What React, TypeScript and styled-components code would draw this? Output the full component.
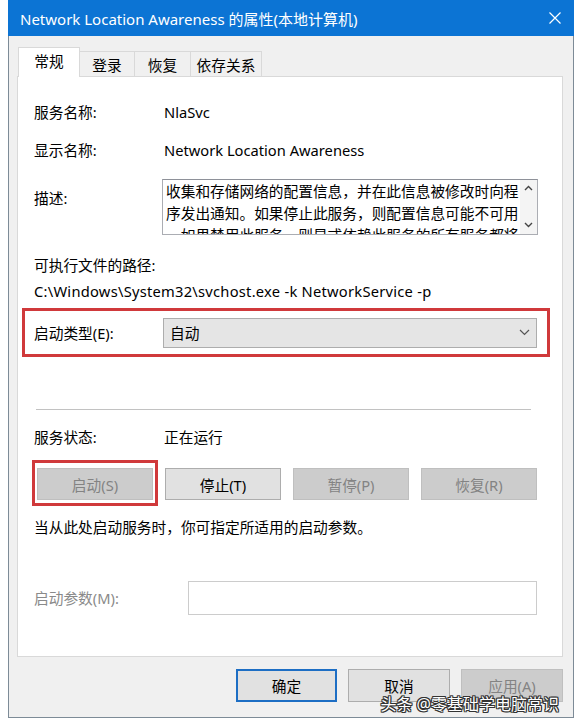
import React from "react";
import styled, { createGlobalStyle } from "styled-components";

const FONT = `"Noto Sans", "Noto Sans CJK SC", sans-serif`;

const Global = createGlobalStyle`
  html, body { margin: 0; padding: 0; background: #ffffff; }
  body { font-family: ${FONT}; }
`;

const Window = styled.div`
  position: relative;
  margin-left: 8px;
  width: 566px;
  height: 718px;
  box-sizing: border-box;
  border: 1px solid #7d8b97;
  border-top: none;
  background: #f0f0f0;
  display: flex;
  flex-direction: column;
  font-family: ${FONT};
  font-size: 14.7px;
  color: #000;
`;

const TitleBar = styled.div`
  margin: 0 -1px;
  height: 36px;
  background: #0c74d4;
  display: flex;
  align-items: center;
  justify-content: space-between;
  padding: 0 13px 0 12px;
  color: #ffffff;
  font-size: 15px;
`;

const Body = styled.div`
  flex: 1;
  display: flex;
  flex-direction: column;
  padding: 12px 10px 0 8px;
`;

const TabStrip = styled.div`
  display: flex;
  align-items: flex-end;
  height: 29px;
  margin-left: 1px;
  margin-bottom: -1px;
  position: relative;
  z-index: 1;
`;

const Tab = styled.div<{ $active?: boolean; $w: number }>`
  box-sizing: border-box;
  width: ${(p) => p.$w}px;
  height: ${(p) => (p.$active ? 30 : 26)}px;
  display: flex;
  align-items: center;
  justify-content: center;
  background: ${(p) => (p.$active ? "#ffffff" : "#f0f0f0")};
  border: 1px solid #d9d9d9;
  border-bottom: ${(p) => (p.$active ? "none" : "1px solid #d9d9d9")};
  ${(p) => (p.$active ? "" : "border-left: none;")}
  padding-bottom: ${(p) => (p.$active ? 4 : 0)}px;
`;

const Panel = styled.div`
  box-sizing: border-box;
  height: 581px;
  background: #ffffff;
  border: 1px solid #d9d9d9;
  padding-left: 16px;
  display: flex;
  flex-direction: column;
`;

const Row = styled.div<{ $mt: number; $align?: string }>`
  display: flex;
  align-items: ${(p) => p.$align || "center"};
  min-height: 24px;
  margin-top: ${(p) => p.$mt}px;
`;

const Label = styled.div<{ $w?: number; $disabled?: boolean; $pt?: number }>`
  width: ${(p) => p.$w ?? 128}px;
  flex: none;
  line-height: 24px;
  color: ${(p) => (p.$disabled ? "#8a8a8a" : "#000")};
  padding-top: ${(p) => p.$pt ?? 0}px;
`;

const Value = styled.div`
  line-height: 24px;
  padding-left: 2px;
  white-space: nowrap;
`;

const PathText = styled.div`
  line-height: 24px;
  white-space: nowrap;
  letter-spacing: 0.25px;
`;

const TextBox = styled.div`
  box-sizing: border-box;
  width: 376px;
  height: 56px;
  border: 1px solid #abadb3;
  border-top-color: #8e9199;
  display: flex;
  background: #fff;
`;

const DescText = styled.div`
  flex: 1;
  overflow: hidden;
  padding-left: 3px;
  line-height: 22px;
  white-space: nowrap;
`;

const ScrollBar = styled.div`
  width: 17px;
  display: flex;
  flex-direction: column;
  justify-content: space-between;
  align-items: center;
  padding: 5px 0 6px;
  background: #f4f4f4;
`;

const RedFrame = styled.div<{ $mt: number }>`
  box-sizing: border-box;
  margin-top: ${(p) => p.$mt}px;
  margin-left: -12px;
  width: 528px;
  height: 49px;
  border: 3px solid #d0393b;
  padding-left: 9px;
  display: flex;
  align-items: center;
`;

const Combo = styled.div`
  box-sizing: border-box;
  width: 374px;
  height: 30px;
  margin-left: 1px;
  background: #e5e5e5;
  border: 1px solid #adadad;
  display: flex;
  align-items: center;
  justify-content: space-between;
  padding: 0 6px 0 6px;
`;

const Separator = styled.div<{ $mt: number }>`
  margin-top: ${(p) => p.$mt}px;
  margin-left: 2px;
  width: 495px;
  height: 1px;
  background: #c2c2c2;
`;

const ButtonRow = styled.div<{ $mt: number }>`
  display: flex;
  gap: 12px;
  margin-top: ${(p) => p.$mt}px;
  margin-left: 3px;
`;

const Button = styled.div<{ $kind?: "normal" | "disabled" | "default"; $w?: number; $h?: number }>`
  position: relative;
  box-sizing: border-box;
  width: ${(p) => p.$w ?? 116}px;
  height: ${(p) => p.$h ?? 32}px;
  display: flex;
  align-items: center;
  justify-content: center;
  background: ${(p) => (p.$kind === "disabled" ? "#cccccc" : "#e1e1e1")};
  border: ${(p) =>
    p.$kind === "default"
      ? "2px solid #1d6ec4"
      : p.$kind === "disabled"
      ? "1px solid #bfbfbf"
      : "1px solid #adadad"};
  color: ${(p) => (p.$kind === "disabled" ? "#838383" : "#000")};
`;

const Annotation = styled.div`
  position: absolute;
  left: -6px;
  right: -6px;
  top: -9px;
  bottom: -7px;
  border: 3px solid #d0393b;
`;

const Hint = styled.div<{ $mt: number }>`
  margin-top: ${(p) => p.$mt}px;
  line-height: 24px;
`;

const ParamInput = styled.div`
  box-sizing: border-box;
  width: 349px;
  height: 34px;
  background: #fff;
  border: 1px solid #cccccc;
`;

const Footer = styled.div`
  display: flex;
  justify-content: flex-end;
  gap: 11px;
  padding-top: 12px;
`;

const Watermark = styled.div`
  position: absolute;
  right: 14px;
  bottom: 2px;
  font-size: 16px;
  color: #ffffff;
  white-space: nowrap;
  text-shadow: 1px 0 0 #333, -1px 0 0 #333, 0 1px 0 #333, 0 -1px 0 #333,
    1px 1px 0 #333, -1px -1px 0 #333, 1px -1px 0 #333, -1px 1px 0 #333;
`;

const Chevron = ({ dir }: { dir: "up" | "down" }) => (
  <svg width="9" height="6" viewBox="0 0 9 6">
    <path
      d={dir === "up" ? "M1 5 L4.5 1.5 L8 5" : "M1 1 L4.5 4.5 L8 1"}
      stroke="#444"
      strokeWidth="1.4"
      fill="none"
    />
  </svg>
);

export default function App() {
  return (
    <>
      <Global />
      <Window>
        <TitleBar>
          <span>Network Location Awareness 的属性(本地计算机)</span>
          <svg width="12" height="12" viewBox="0 0 12 12">
            <path d="M0.5 0.5 L11.5 11.5 M11.5 0.5 L0.5 11.5" stroke="#fff" strokeWidth="1.2" />
          </svg>
        </TitleBar>
        <Body>
          <TabStrip>
            <Tab $active $w={62}>常规</Tab>
            <Tab $w={55}>登录</Tab>
            <Tab $w={56}>恢复</Tab>
            <Tab $w={71}>依存关系</Tab>
          </TabStrip>
          <Panel>
            <Row $mt={23}>
              <Label>服务名称:</Label>
              <Value>NlaSvc</Value>
            </Row>
            <Row $mt={14}>
              <Label>显示名称:</Label>
              <Value>Network Location Awareness</Value>
            </Row>
            <Row $mt={17} $align="flex-start">
              <Label $pt={7}>描述:</Label>
              <TextBox>
                <DescText>
                  收集和存储网络的配置信息，并在此信息被修改时向程
                  <br />
                  序发出通知。如果停止此服务，则配置信息可能不可用
                  <br />
                  。如果禁用此服务，则显式依赖此服务的所有服务都将
                </DescText>
                <ScrollBar>
                  <Chevron dir="up" />
                  <Chevron dir="down" />
                </ScrollBar>
              </TextBox>
            </Row>
            <Row $mt={18}>
              <Label $w={300}>可执行文件的路径:</Label>
            </Row>
            <Row $mt={2}>
              <PathText>C:\Windows\System32\svchost.exe -k NetworkService -p</PathText>
            </Row>
            <RedFrame $mt={5}>
              <Label>启动类型(E):</Label>
              <Combo>
                <span>自动</span>
                <svg width="11" height="7" viewBox="0 0 11 7">
                  <path d="M1 1 L5.5 5.5 L10 1" stroke="#555" strokeWidth="1.2" fill="none" />
                </svg>
              </Combo>
            </RedFrame>
            <Separator $mt={52} />
            <Row $mt={15}>
              <Label>服务状态:</Label>
              <Value>正在运行</Value>
            </Row>
            <ButtonRow $mt={19}>
              <Button $kind="disabled">
                启动(S)
                <Annotation />
              </Button>
              <Button $kind="normal">停止(T)</Button>
              <Button $kind="disabled">暂停(P)</Button>
              <Button $kind="disabled">恢复(R)</Button>
            </ButtonRow>
            <Hint $mt={15}>当从此处启动服务时，你可指定所适用的启动参数。</Hint>
            <Row $mt={42}>
              <Label $w={154} $disabled>启动参数(M):</Label>
              <ParamInput />
            </Row>
          </Panel>
          <Footer>
            <Button $kind="default" $w={101} $h={33}>确定</Button>
            <Button $kind="normal" $w={102} $h={33}>取消</Button>
            <Button $kind="disabled" $w={102} $h={33}>应用(A)</Button>
          </Footer>
        </Body>
        <Watermark>头条 @零基础学电脑常识</Watermark>
      </Window>
    </>
  );
}
